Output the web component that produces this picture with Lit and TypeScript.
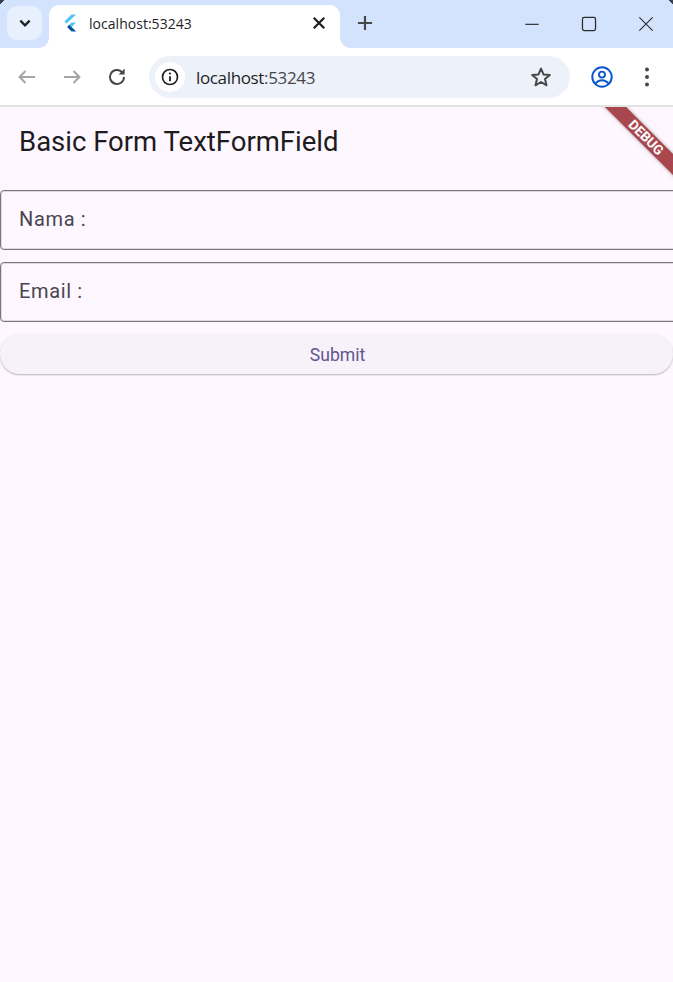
import {html, css, LitElement, svg} from 'lit';
import {customElement} from 'lit/decorators.js';

const icon = (size: number, body: unknown) => html`<svg width=${size} height=${size} viewBox="0 0 24 24" fill="none">${body}</svg>`;

@customElement('app-root')
export class AppRoot extends LitElement {
  static styles = css`
    :host {
      display: flex;
      flex-direction: column;
      height: 100vh;
      overflow: hidden;
      font-family: Roboto, sans-serif;
      background: #fef7ff;
    }
    svg { display: block; flex: none; }

    .tabstrip {
      display: flex;
      align-items: flex-start;
      height: 48px;
      flex: none;
      background:
        linear-gradient(135deg, #3a3f4a 3px, transparent 3.5px),
        linear-gradient(225deg, #3a3f4a 3px, transparent 3.5px),
        #d3e3fd;
      padding-left: 7px;
      box-sizing: border-box;
    }
    .tab-menu {
      width: 35px;
      height: 34px;
      margin-top: 6px;
      border-radius: 10px;
      background: #e8f0fe;
      display: flex;
      align-items: center;
      justify-content: center;
    }
    .tab {
      position: relative;
      width: 291px;
      height: 43px;
      margin: 5px 0 0 7px;
      background: #fff;
      border-radius: 10px 10px 0 0;
      display: flex;
      align-items: center;
      padding: 0 12px 7px 13px;
      box-sizing: border-box;
    }
    .tab::before, .tab::after {
      content: '';
      position: absolute;
      bottom: 0;
      width: 10px;
      height: 10px;
      background: radial-gradient(circle at var(--cx) 0, #d3e3fd 9.5px, #fff 10px);
    }
    .tab::before { left: -10px; --cx: 0; }
    .tab::after { right: -10px; --cx: 10px; }
    .tab-title {
      flex: 1;
      margin-left: 11px;
      font: 14px "Open Sans", sans-serif;
      letter-spacing: 0.03px;
      color: #1f1f1f;
    }
    .new-tab { margin: 13px 0 0 15px; }
    .win {
      margin-left: auto;
      display: flex;
      gap: 41px;
      margin-top: 16px;
      padding-right: 19px;
    }

    .toolbar {
      height: 59px;
      flex: none;
      background: #fff;
      display: flex;
      align-items: center;
      padding: 1px 13px 0 15px;
      box-sizing: border-box;
      border-bottom: 2px solid #e3e3e3;
    }
    .nav { display: flex; gap: 21px; margin-right: 20px; }
    .omnibox {
      width: 421px;
      height: 42px;
      border-radius: 21px;
      background: #edf2fa;
      display: flex;
      align-items: center;
      padding: 0 17px 0 6px;
      box-sizing: border-box;
    }
    .info {
      width: 30px;
      height: 30px;
      border-radius: 50%;
      background: #fff;
      display: flex;
      align-items: center;
      justify-content: center;
    }
    .url {
      flex: 1;
      margin-left: 11px;
      font: 17px "Open Sans", sans-serif;
      letter-spacing: -0.35px;
      color: #1f1f1f;
    }
    .url span { color: #474747; }
    .profile { margin-left: 20px; }
    .more { margin-left: 21px; }

    .page {
      position: relative;
      flex: 1;
      display: flex;
      flex-direction: column;
      overflow: hidden;
      background: #fef7ff;
    }
    h1 {
      margin: 0;
      height: 83px;
      padding: 19px 0 0 19px;
      box-sizing: border-box;
      font: 400 27.5px/32px Roboto, sans-serif;
      color: #1d1b20;
    }
    .field {
      width: calc(100% + 6px);
      height: 60px;
      box-sizing: border-box;
      border: 1px solid #79747e;
      box-shadow: inset 0 0 0 1px rgba(121, 116, 126, 0.22);
      border-radius: 4px;
      display: flex;
      align-items: center;
      padding: 0 0 2px 18px;
      font-size: 20px;
      letter-spacing: 0.65px;
      color: #49454f;
    }
    .field + .field { margin-top: 12px; }
    .submit {
      height: 40px;
      margin-top: 12px;
      box-sizing: border-box;
      border-radius: 20px;
      background: #f7f2fa;
      box-shadow: 0 1px 2px rgba(0, 0, 0, 0.28);
      display: flex;
      align-items: center;
      justify-content: center;
      font-size: 17.6px;
      padding: 1px 0 0 2px;
      color: #65558f;
    }
    .ribbon-clip {
      position: absolute;
      top: 0;
      right: 0;
      width: 90px;
      height: 90px;
      overflow: hidden;
    }
    .ribbon {
      position: absolute;
      left: 3px;
      top: 22.5px;
      width: 120px;
      height: 15px;
      transform: rotate(45deg);
      background: #a8474e;
      box-shadow: 0 0 4px rgba(0, 0, 0, 0.35);
      color: #fff;
      font: 700 13.5px/15px Roboto, sans-serif;
      text-align: center;
    }
  `;

  render() {
    return html`
      <div class="tabstrip">
        <div class="tab-menu">
          ${icon(16, svg`<path d="M5 8.5l7 7 7-7" stroke="#1f1f1f" stroke-width="3.4"/>`)}
        </div>
        <div class="tab">
          <svg width="16" height="18" viewBox="0 0 16 18">
            <path d="M9.5 0.5h4.6L4.6 9.6 2.3 7.4z" fill="#54c5f8"/>
            <path d="M9.5 8.5h4.6L9.6 13l-2.4-2.2z" fill="#54c5f8"/>
            <path d="M7.2 10.8L9.6 13l4.5 4.5H9.5l-4.4-4.4z" fill="#01579b"/>
          </svg>
          <span class="tab-title">localhost:53243</span>
          ${icon(18, svg`<path d="M5 5l14 14M19 5L5 19" stroke="#1f1f1f" stroke-width="3"/>`)}
        </div>
        <div class="new-tab">
          ${icon(20, svg`<path d="M12 3.5v17M3.5 12h17" stroke="#474747" stroke-width="2.6"/>`)}
        </div>
        <div class="win">
          ${icon(16, svg`<path d="M2 12.5h20" stroke="#2a2a2a" stroke-width="1.7"/>`)}
          ${icon(16, svg`<rect x="2.2" y="2.2" width="19.6" height="19.6" rx="2.5" stroke="#2a2a2a" stroke-width="1.9"/>`)}
          ${icon(16, svg`<path d="M2 2l20 20M22 2L2 22" stroke="#2a2a2a" stroke-width="1.6"/>`)}
        </div>
      </div>

      <div class="toolbar">
        <div class="nav">
          ${icon(24, svg`<path d="M20 12H5M10.5 6L4.6 12l5.9 6" stroke="#a3a5a8" stroke-width="2"/>`)}
          ${icon(24, svg`<path d="M4 12h15M13.5 6l5.9 6-5.9 6" stroke="#a3a5a8" stroke-width="2"/>`)}
          ${icon(24, svg`<path d="M19 12a7 7 0 1 1-2.2-5.1" stroke="#474747" stroke-width="2"/><path d="M19.6 3.5v6h-6" fill="#474747"/>`)}
        </div>
        <div class="omnibox">
          <div class="info">
            ${icon(20, svg`<circle cx="12" cy="12" r="9" stroke="#1f1f1f" stroke-width="2"/><path d="M12 11v6" stroke="#1f1f1f" stroke-width="2.2"/><circle cx="12" cy="7.8" r="1.3" fill="#1f1f1f"/>`)}
          </div>
          <span class="url">localhost<span>:53243</span></span>
          ${icon(24, svg`<path d="M12 3.6l2.5 5.8 6.3.6-4.8 4.1 1.5 6.2-5.5-3.3-5.5 3.3 1.5-6.2L3.2 10l6.3-.6z" stroke="#474747" stroke-width="2" stroke-linejoin="round"/>`)}
        </div>
        <div class="profile">
          ${icon(24, svg`<circle cx="12" cy="12" r="9.7" stroke="#0b57d0" stroke-width="2"/><circle cx="12" cy="9.6" r="3" stroke="#0b57d0" stroke-width="1.9"/><path d="M5.5 18.5c1.8-2.3 4-3.2 6.5-3.2s4.7.9 6.5 3.2" stroke="#0b57d0" stroke-width="1.9"/>`)}
        </div>
        <div class="more">
          ${icon(24, svg`<circle cx="12" cy="4.5" r="2" fill="#474747"/><circle cx="12" cy="12" r="2" fill="#474747"/><circle cx="12" cy="19.5" r="2" fill="#474747"/>`)}
        </div>
      </div>

      <main class="page">
        <h1>Basic Form TextFormField</h1>
        <div class="field">Nama :</div>
        <div class="field">Email :</div>
        <div class="submit">Submit</div>
        <div class="ribbon-clip"><div class="ribbon">DEBUG</div></div>
      </main>
    `;
  }
}
